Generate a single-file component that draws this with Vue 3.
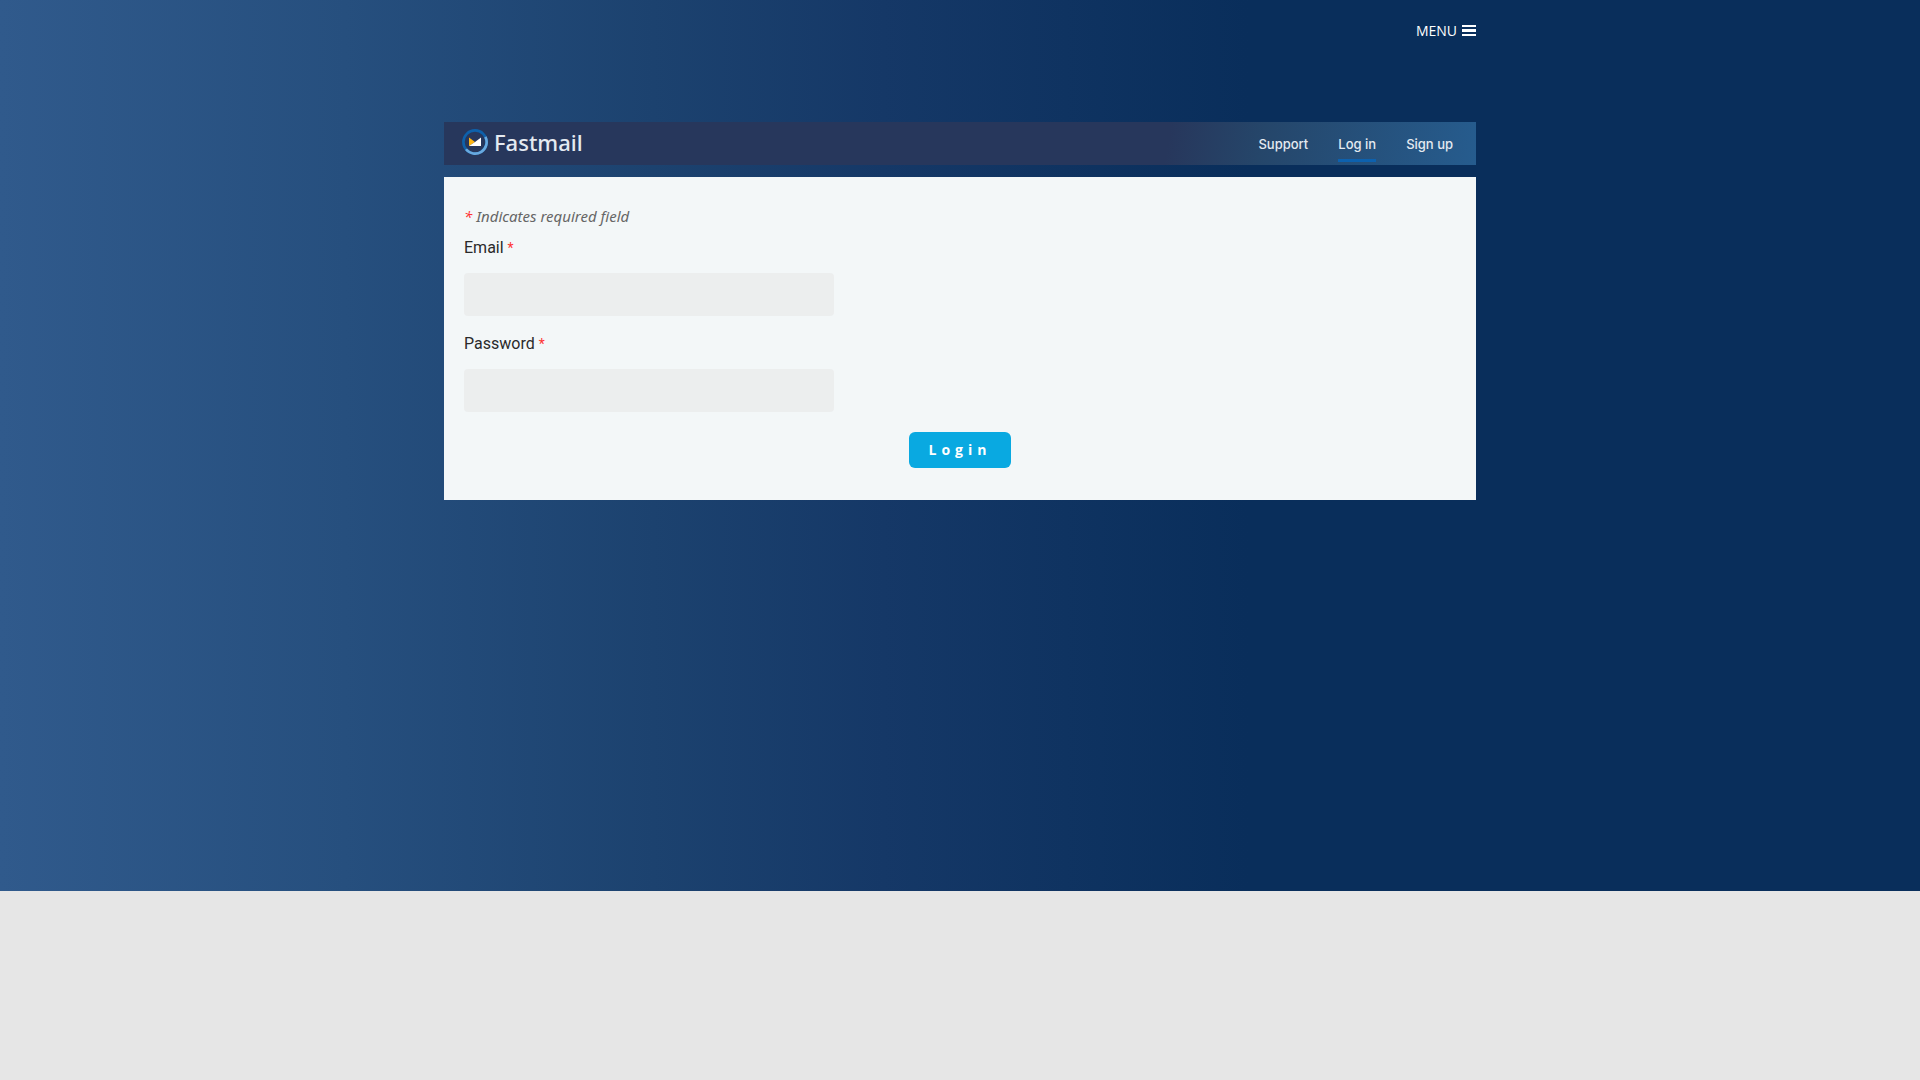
<script setup>
import { ref } from 'vue'

const email = ref('')
const password = ref('')
</script>

<template>
  <div class="page">
    <div class="hero">
      <header class="topbar">
        <button type="button" class="menu">
          MENU
          <svg width="14" height="12" viewBox="0 0 14 12" aria-hidden="true">
            <path d="M0 0h14v2H0zM0 4h14v3H0zM0 9h14v2H0z" fill="#fff" />
          </svg>
        </button>
      </header>

      <nav class="banner">
        <a class="brand" href="#">
          <svg width="26" height="26" viewBox="0 0 26 26" aria-hidden="true">
            <circle cx="13" cy="13" r="11.6" fill="none" stroke="#0e61ab" stroke-width="2.6" />
            <path d="M23.4 7.8A11.6 11.6 0 0 1 4 20.3" fill="none" stroke="#68a9df" stroke-width="2.6" />
            <path d="M7 8.5v8.5l6-4z" fill="#fdb515" />
            <path d="M7 17l6-4 6-4.500v8.500z" fill="#fff" />
          </svg>
          <span>Fastmail</span>
        </a>
        <div class="links">
          <a href="#">Support</a>
          <a href="#" class="active">Log in</a>
          <a href="#">Sign up</a>
        </div>
      </nav>

      <form class="panel" @submit.prevent>
        <p class="note"><span class="star">*</span> Indicates required field</p>
        <label for="email">Email <span class="star">*</span></label>
        <input id="email" v-model="email" type="text" />
        <label for="password">Password <span class="star">*</span></label>
        <input id="password" v-model="password" type="password" />
        <button type="submit" class="login">Login</button>
      </form>
    </div>
  </div>
</template>

<style>
body {
  background: #e6e6e6;
}
</style>

<style scoped>
* {
  box-sizing: border-box;
}

.hero {
  padding-bottom: 391px;
  background: linear-gradient(90deg, #305a8c 0%, #264f7e 18%, #1c426f 34%, #153867 46%, #092e5b 65%);
}

.topbar,
.banner,
.panel {
  width: 100%;
  max-width: 1032px;
  margin: 0 auto;
}

.topbar {
  display: flex;
  justify-content: flex-end;
  height: 122px;
  padding-top: 20px;
}

.menu {
  display: flex;
  align-items: center;
  gap: 5px;
  height: 22px;
  padding: 0;
  border: 0;
  background: none;
  color: #fff;
  font: 14px/22px "Open Sans", sans-serif;
}

.banner {
  display: flex;
  justify-content: space-between;
  height: 43px;
  padding: 0 23px 0 18px;
  background: linear-gradient(100deg, #27375c 70%, #25466a 79%, #265c8e 100%);
}

.banner a {
  color: #e4eaf1;
  text-decoration: none;
}

.brand {
  display: flex;
  align-items: center;
  gap: 6px;
  height: 40px;
  font: 500 22px/40px "Noto Sans", sans-serif;
}

.links {
  display: flex;
  gap: 30px;
  height: 40px;
  font: 500 13px/44px Inter, sans-serif;
}

.links .active {
  border-bottom: 3px solid #0d61ae;
}

.panel {
  display: flex;
  flex-direction: column;
  align-items: flex-start;
  margin-top: 12px;
  padding: 27px 20px 32px;
  background: #f3f7f8;
}

.note {
  margin: 0 0 8px;
  color: #666;
  font: italic 15px/24px "Noto Sans", sans-serif;
}

.star {
  color: #f33;
}

label {
  margin-bottom: 13px;
  color: #2a2a2a;
  font: 16px/24px Roboto, sans-serif;
}

label .star {
  font-size: 14px;
}

input {
  width: 370px;
  max-width: 100%;
  height: 43px;
  padding: 0 12px;
  border: 0;
  border-radius: 4px;
  background: #eceeee;
  font: 16px Roboto, sans-serif;
}

input + label {
  margin-top: 16px;
}

.login {
  align-self: center;
  height: 36px;
  margin-top: 20px;
  padding: 0 20px;
  border: 0;
  border-radius: 6px;
  background: #09a9e1;
  color: #fff;
  font: 700 14px/36px "Open Sans", sans-serif;
  letter-spacing: 5px;
}
</style>
